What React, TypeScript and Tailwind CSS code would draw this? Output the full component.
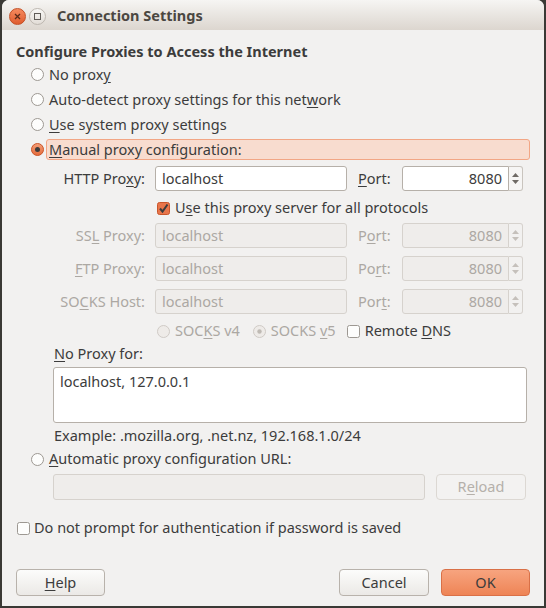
import type { ReactNode } from "react";

const font = { fontFamily: '"Noto Sans", "Open Sans", sans-serif' };

function Radio({ checked = false, disabled = false }: { checked?: boolean; disabled?: boolean }) {
    if (checked) {
        return (
            <svg width="13" height="13" viewBox="0 0 13 13" className="shrink-0">
                <defs>
                    <linearGradient id="rg" x1="0" y1="0" x2="0" y2="1">
                        <stop offset="0" stopColor="#f4a07a" />
                        <stop offset="1" stopColor="#e46a39" />
                    </linearGradient>
                </defs>
                <circle cx="6.5" cy="6.5" r="6" fill="url(#rg)" stroke="#c9552a" />
                <circle cx="6.5" cy="6.5" r="2.5" fill="#3c3c3c" />
            </svg>
        );
    }
    return (
        <svg width="13" height="13" viewBox="0 0 13 13" className="shrink-0">
            <circle
                cx="6.5"
                cy="6.5"
                r="6"
                fill={disabled ? "#eeebe8" : "#fdfdfc"}
                stroke={disabled ? "#cfcac5" : "#9d9892"}
            />
        </svg>
    );
}

function RadioDot() {
    return (
        <svg width="13" height="13" viewBox="0 0 13 13" className="shrink-0">
            <circle cx="6.5" cy="6.5" r="6" fill="#eeebe8" stroke="#cfcac5" />
            <circle cx="6.5" cy="6.5" r="2.2" fill="#bfbab4" />
        </svg>
    );
}

function Check({ checked = false }: { checked?: boolean }) {
    if (checked) {
        return (
            <svg width="13" height="13" viewBox="0 0 13 13" className="shrink-0">
                <rect x="0.5" y="0.5" width="12" height="12" rx="2" fill="#e8754a" stroke="#c9552a" />
                <path d="M3 6.5 L5.5 9.5 L10.5 2.5" fill="none" stroke="#3c3c3c" strokeWidth="2" />
            </svg>
        );
    }
    return (
        <svg width="13" height="13" viewBox="0 0 13 13" className="shrink-0">
            <rect x="0.5" y="0.5" width="12" height="12" rx="2" fill="#fdfdfc" stroke="#9d9892" />
        </svg>
    );
}

function Field({
    value,
    disabled = false,
    className = "",
    right = false,
}: {
    value: string;
    disabled?: boolean;
    className?: string;
    right?: boolean;
}) {
    return (
        <div
            className={`flex h-[25px] items-center rounded-[3px] border px-[6px] ${
                right ? "justify-end" : ""
            } ${
                disabled
                    ? "border-[#d6d2cd] bg-[#efedeb] text-[#aca8a3]"
                    : "border-[#b6b0a9] bg-white text-[#3c3c3c]"
            } ${className}`}
        >
            {value}
        </div>
    );
}

function Spin({ value, disabled = false }: { value: string; disabled?: boolean }) {
    const arrow = disabled ? "#c5c0bb" : "#6f6a65";
    return (
        <div className="flex h-[25px]">
            <Field value={value} disabled={disabled} right className="w-[107px] rounded-r-none" />
            <div
                className={`flex w-[14px] flex-col items-center justify-center gap-[3px] rounded-r-[3px] border border-l-0 ${
                    disabled ? "border-[#d6d2cd] bg-[#f2f1f0]" : "border-[#c9c4be] bg-[#f6f5f4]"
                }`}
            >
                <svg width="7" height="4" viewBox="0 0 7 4">
                    <path d="M0 4 L3.5 0 L7 4 Z" fill={arrow} />
                </svg>
                <svg width="7" height="4" viewBox="0 0 7 4">
                    <path d="M0 0 L3.5 4 L7 0 Z" fill={arrow} />
                </svg>
            </div>
        </div>
    );
}

function Btn({ children, primary = false, disabled = false, className = "" }: { children: ReactNode; primary?: boolean; disabled?: boolean; className?: string }) {
    return (
        <div
            className={`flex items-center justify-center rounded-[4px] border ${
                primary
                    ? "border-[#d97047] bg-gradient-to-b from-[#f7a47f] to-[#ee8455] text-[#3c3c3c]"
                    : disabled
                      ? "border-[#dcd8d3] bg-[#f3f2f1] text-[#b5b0aa]"
                      : "border-[#b8b2ab] bg-gradient-to-b from-[#fcfcfb] to-[#ebe9e6] text-[#3c3c3c]"
            } ${className}`}
        >
            {children}
        </div>
    );
}

function ProxyRow({ label, port, disabled = false }: { label: ReactNode; port: ReactNode; disabled?: boolean }) {
    const tc = disabled ? "text-[#aca8a3]" : "text-[#3c3c3c]";
    return (
        <div className="flex h-[25px] items-center">
            <div className={`w-[129px] text-right ${tc}`}>{label}</div>
            <Field value="localhost" disabled={disabled} className="ml-[10px] w-[192px]" />
            <div className={`ml-[11px] w-[44px] ${tc}`}>{port}</div>
            <Spin value="8080" disabled={disabled} />
        </div>
    );
}

export default function App() {
    const dim = "text-[#aca8a3]";
    return (
        <div className="h-[608px] w-[546px] bg-[#3a3935] pb-[2px] pl-[2px] pr-[2px] text-[14.5px] text-[#3c3c3c]" style={font}>
            <div className="flex h-full flex-col overflow-hidden rounded-t-[7px] bg-[#f2f1f0]">
                <div className="flex h-[30px] shrink-0 items-center bg-gradient-to-b from-[#f6f5f3] to-[#dcd6cf] pl-[7px] pt-[2px]">
                    <div className="flex h-[17px] w-[17px] items-center justify-center rounded-full border border-[#c34f25] bg-gradient-to-b from-[#f58a5e] to-[#df5b2c]">
                        <svg width="7" height="7" viewBox="0 0 7 7">
                            <path d="M1 1 L6 6 M6 1 L1 6" stroke="#5a2a18" strokeWidth="1.3" />
                        </svg>
                    </div>
                    <div className="ml-[3px] flex h-[17px] w-[17px] items-center justify-center rounded-full border border-[#bdb7b0] bg-gradient-to-b from-[#f8f7f5] to-[#e2ddd7]">
                        <div className="h-[7px] w-[7px] border border-[#5f5b57]" />
                    </div>
                    <div className="ml-[11px] text-[14.5px] font-bold text-[#4b4741]">Connection Settings</div>
                </div>

                <div className="flex flex-col px-[14px]">
                    <div className="mt-[12px] flex h-[20px] items-center text-[14.5px] font-bold">Configure Proxies to Access the Internet</div>

                    <div className="flex flex-col pl-[15px]">
                        <div className="flex h-[25px] items-center gap-[5px]">
                            <Radio />
                            <span>No prox<u className="underline-offset-2">y</u></span>
                        </div>
                        <div className="flex h-[25px] items-center gap-[5px]">
                            <Radio />
                            <span>Auto-detect proxy settings for this net<u className="underline-offset-2">w</u>ork</span>
                        </div>
                        <div className="flex h-[25px] items-center gap-[5px]">
                            <Radio />
                            <span><u className="underline-offset-2">U</u>se system proxy settings</span>
                        </div>
                        <div className="flex h-[25px] items-center">
                            <Radio checked />
                            <div className="ml-[2px] flex h-[21px] flex-1 items-center rounded-[3px] border border-[#f2a685] bg-[#f8dccf] pl-[2px]">
                                <span><u className="underline-offset-2">M</u>anual proxy configuration:</span>
                            </div>
                        </div>
                    </div>

                    <div className="mt-[4px]">
                        <ProxyRow
                            label={<>HTTP Pro<u className="underline-offset-2">x</u>y:</>}
                            port={<><u className="underline-offset-2">P</u>ort:</>}
                        />
                    </div>

                    <div className="mt-[5px] flex h-[24px] items-center gap-[5px] pl-[141px]">
                        <Check checked />
                        <span>U<u className="underline-offset-2">s</u>e this proxy server for all protocols</span>
                    </div>

                    <div className="mt-[3px] flex flex-col gap-[8px]">
                        <ProxyRow disabled label={<>SS<u className="underline-offset-2">L</u> Proxy:</>} port={<>P<u className="underline-offset-2">o</u>rt:</>} />
                        <ProxyRow disabled label={<><u className="underline-offset-2">F</u>TP Proxy:</>} port={<>Po<u className="underline-offset-2">r</u>t:</>} />
                        <ProxyRow disabled label={<>SO<u className="underline-offset-2">C</u>KS Host:</>} port={<>Por<u className="underline-offset-2">t</u>:</>} />
                    </div>

                    <div className="mt-[5px] flex h-[24px] items-center pl-[141px]">
                        <Radio disabled />
                        <span className={`ml-[5px] ${dim}`}>SOC<u className="underline-offset-2">K</u>S v4</span>
                        <div className="ml-[13px]"><RadioDot /></div>
                        <span className={`ml-[5px] ${dim}`}>SOCKS <u className="underline-offset-2">v</u>5</span>
                        <div className="ml-[11px]"><Check /></div>
                        <span className="ml-[5px]">Remote <u className="underline-offset-2">D</u>NS</span>
                    </div>

                    <div className="mt-[2px] flex h-[18px] items-center pl-[38px]">
                        <span><u className="underline-offset-2">N</u>o Proxy for:</span>
                    </div>

                    <div className="ml-[37px] mt-[4px] h-[56px] w-[474px] rounded-[3px] border border-[#b6b0a9] bg-white px-[6px] pt-[3px]">
                        localhost, 127.0.0.1
                    </div>

                    <div className="mt-[4px] flex h-[18px] items-center pl-[38px]">Example: .mozilla.org, .net.nz, 192.168.1.0/24</div>

                    <div className="mt-[4px] flex h-[20px] items-center gap-[5px] pl-[15px]">
                        <Radio />
                        <span><u className="underline-offset-2">A</u>utomatic proxy configuration URL:</span>
                    </div>

                    <div className="mt-[5px] flex h-[26px] items-center pl-[37px]">
                        <div className="h-[26px] w-[372px] rounded-[3px] border border-[#d6d2cd] bg-[#efedeb]" />
                        <Btn disabled className="ml-[11px] h-[26px] w-[90px]">
                            <span>R<u className="underline-offset-2">e</u>load</span>
                        </Btn>
                    </div>

                    <div className="mt-[18px] flex h-[20px] items-center gap-[4px] pl-[1px]">
                        <Check />
                        <span>Do not prompt for authent<u className="underline-offset-2">i</u>cation if password is saved</span>
                    </div>

                    <div className="mt-[31px] flex h-[27px] items-center">
                        <Btn className="h-[27px] w-[89px]">
                            <span><u className="underline-offset-2">H</u>elp</span>
                        </Btn>
                        <div className="flex-1" />
                        <Btn className="h-[27px] w-[90px]">Cancel</Btn>
                        <Btn primary className="ml-[12px] h-[27px] w-[89px]">OK</Btn>
                    </div>
                </div>
            </div>
        </div>
    );
}
